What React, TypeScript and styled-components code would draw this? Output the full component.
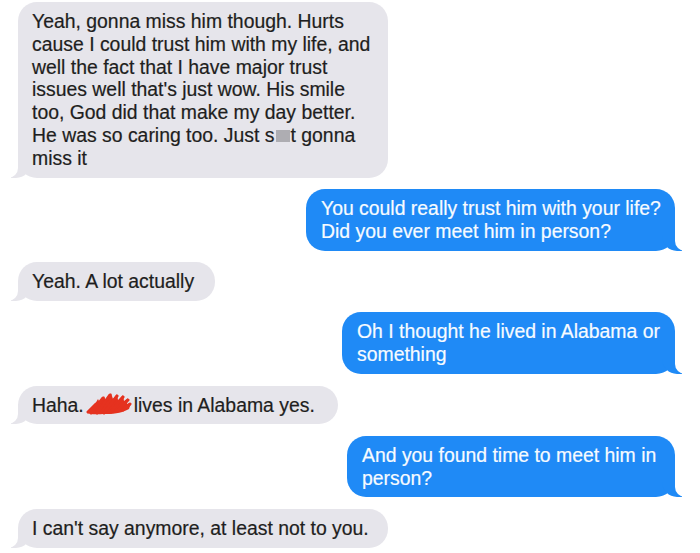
import React from "react";
import styled, { createGlobalStyle, css } from "styled-components";

const GlobalStyle = createGlobalStyle`
  html, body {
    margin: 0;
    padding: 0;
    background: #ffffff;
  }
  body {
    font-family: "Liberation Sans", Arial, Helvetica, sans-serif;
  }
`;

const GRAY = "#e6e5eb";
const BLUE = "#1f8af6";

const Thread = styled.div`
  display: flex;
  flex-direction: column;
  gap: 11.5px;
  padding: 2px 25px 0 18px;
  width: 700px;
  height: 553px;
  box-sizing: border-box;
  overflow: hidden;
`;

const Bubble = styled.div<{ $mine?: boolean; $width: number }>`
  position: relative;
  z-index: 0;
  box-sizing: border-box;
  width: ${(p) => `${p.$width}px`};
  padding: 8px 14px;
  border-radius: 19px;
  font-size: 19.4px;
  line-height: 22.8px;
  white-space: nowrap;
  -webkit-text-stroke: 0.2px currentColor;
  background: ${(p) => (p.$mine ? BLUE : GRAY)};
  color: ${(p) => (p.$mine ? "#f7fbff" : "#1e1e20")};
  align-self: ${(p) => (p.$mine ? "flex-end" : "flex-start")};

  &::before,
  &::after {
    content: "";
    position: absolute;
    z-index: -1;
    bottom: 0;
    height: 20px;
  }

  ${(p) =>
    p.$mine
      ? css`
          padding-left: 15px;
          &::before {
            right: -7px;
            width: 20px;
            background: ${BLUE};
            border-bottom-left-radius: 15px;
          }
          &::after {
            right: -10px;
            width: 10px;
            background: #ffffff;
            border-bottom-left-radius: 10px;
          }
        `
      : css`
          &::before {
            left: -7px;
            width: 20px;
            background: ${GRAY};
            border-bottom-right-radius: 15px;
          }
          &::after {
            left: -10px;
            width: 10px;
            background: #ffffff;
            border-bottom-right-radius: 10px;
          }
        `}
`;

// grey box hiding the middle letters of a word
const Censor = styled.span`
  display: inline-block;
  width: 14px;
  height: 12px;
  margin: 0 1px;
  background: #aeadb2;
  filter: blur(0.6px);
`;

const Scribble = styled.svg`
  display: inline-block;
  width: 46px;
  height: 24px;
  vertical-align: -4px;
  margin: -4px 2px 0 2px;
`;

const RedScribble = () => (
  <Scribble viewBox="0 0 46 24">
    <path
      d="M1 21 C4 17 7 14 9 12 L12 7 L14 11 L18 4 L20 9 L25 1 L27 7 L31 2 L32 8 L37 3 L38 9 L42 6 L41 12 L45 11 L43 17 C38 20 30 22 20 22 C12 22 6 23 1 21 Z"
      fill="#e5321f"
    />
    <path
      d="M2 20 L10 12 M5 21 L17 6 M11 21 L24 3 M18 21 L31 4 M25 20 L37 5 M31 19 L42 8 M37 18 L44 12"
      stroke="#e5321f"
      strokeWidth="3"
      strokeLinecap="round"
      fill="none"
    />
  </Scribble>
);

const App = () => (
  <>
    <GlobalStyle />
    <Thread>
      <Bubble $width={370}>
        Yeah, gonna miss him though. Hurts
        <br />
        cause I could trust him with my life, and
        <br />
        well the fact that I have major trust
        <br />
        issues well that's just wow. His smile
        <br />
        too, God did that make my day better.
        <br />
        He was so caring too. Just s<Censor />t gonna
        <br />
        miss it
      </Bubble>
      <Bubble $mine $width={369}>
        You could really trust him with your life?
        <br />
        Did you ever meet him in person?
      </Bubble>
      <Bubble $width={197}>Yeah. A lot actually</Bubble>
      <Bubble $mine $width={333}>
        Oh I thought he lived in Alabama or
        <br />
        something
      </Bubble>
      <Bubble $width={320}>
        Haha.
        <RedScribble />
        lives in Alabama yes.
      </Bubble>
      <Bubble $mine $width={328}>
        And you found time to meet him in
        <br />
        person?
      </Bubble>
      <Bubble $width={370}>I can't say anymore, at least not to you.</Bubble>
    </Thread>
  </>
);

export default App;
